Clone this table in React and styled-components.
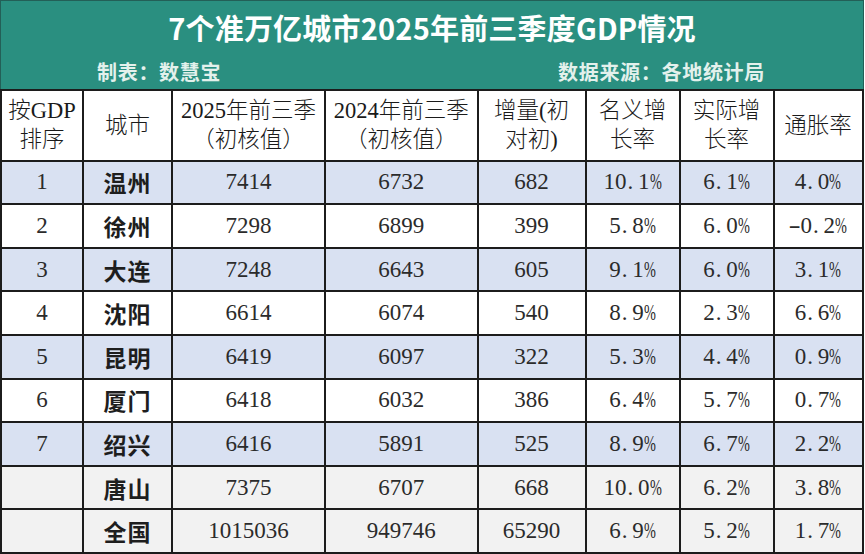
import React from "react";
import styled, { createGlobalStyle } from "styled-components";

const GlobalStyle = createGlobalStyle`
  html, body { margin: 0; padding: 0; background: #ffffff; }
  body { font-family: "Liberation Serif", "Noto Sans CJK SC", serif; }
`;

const Page = styled.div`
  width: 864px;
  height: 554px;
  overflow: hidden;
  display: flex;
  flex-direction: column;
`;

const Banner = styled.header`
  height: 89px;
  box-sizing: border-box;
  background: #2a8f80;
  border: 1px solid #235f57;
  border-bottom: none;
  display: flex;
  flex-direction: column;
  padding-top: 6px;
`;

const Title = styled.h1`
  margin: 0;
  font-family: "Noto Sans CJK SC", "Noto Sans", sans-serif;
  font-weight: 700;
  font-size: 29px;
  line-height: 40px;
  color: #ffffff;
  text-align: center;
  letter-spacing: 0.2px;
`;

const SubRow = styled.div`
  margin-top: 11px;
  display: flex;
  justify-content: space-between;
  padding: 0 98px 0 96px;
`;

const SubText = styled.span`
  font-family: "Noto Sans CJK SC", "Noto Sans", sans-serif;
  font-weight: 700;
  font-size: 20px;
  line-height: 28px;
  letter-spacing: 0.7px;
  color: #e3f1ec;
`;

const Grid = styled.div`
  display: grid;
  grid-template-columns: 82px 89px 153px 152.5px 108px 94px 94px 89px;
  grid-template-rows: 71px repeat(9, 43.6px);
  border-top: 2px solid #1c1c1c;
  border-left: 2px solid #1c1c1c;
  width: max-content;
`;

const rowBg = { blue: "#d9e1f2", white: "#ffffff", gray: "#f2f2f2" };

const Cell = styled.div`
  box-sizing: border-box;
  border-right: 2px solid #1c1c1c;
  border-bottom: 2px solid #1c1c1c;
  background: ${(p) => rowBg[p.$tone] || "#ffffff"};
  display: flex;
  align-items: center;
  justify-content: center;
  text-align: center;
  font-family: "Liberation Serif", "Noto Sans CJK SC", serif;
  font-size: 23px;
  color: #2b2b2b;
  white-space: nowrap;
`;

const HeadCell = styled(Cell)`
  font-size: 22.5px;
  font-weight: 300;
  line-height: 29px;
  color: #1a1a1a;
  white-space: normal;
`;

const CityCell = styled(Cell)`
  font-family: "Noto Sans CJK SC", sans-serif;
  font-weight: 700;
  letter-spacing: 1px;
  color: #1e1e1e;
`;

const Dot = styled.span`
  display: inline-block;
  width: 0.5em;
  text-align: left;
  padding-left: 0.04em;
  box-sizing: border-box;
`;

const Percent = styled.span`
  display: inline-block;
  width: 0.52em;
  transform: scaleX(0.62);
  transform-origin: left center;
`;

const Minus = styled.span`
  display: inline-block;
  width: 0.5em;
  transform: scaleX(1.6);
  transform-origin: center;
`;

function Figure({ text }) {
  const parts = [];
  let buf = "";
  const flush = () => {
    if (buf) {
      parts.push(buf);
      buf = "";
    }
  };
  [...text].forEach((ch, i) => {
    if (ch === ".") {
      flush();
      parts.push(<Dot key={i}>.</Dot>);
    } else if (ch === "%") {
      flush();
      parts.push(<Percent key={i}>%</Percent>);
    } else if (ch === "-") {
      flush();
      parts.push(<Minus key={i}>-</Minus>);
    } else {
      buf += ch;
    }
  });
  flush();
  return <span>{parts}</span>;
}

const headers = [
  ["按GDP", "排序"],
  ["城市"],
  ["2025年前三季", "（初核值）"],
  ["2024年前三季", "（初核值）"],
  ["增量(初", "对初)"],
  ["名义增", "长率"],
  ["实际增", "长率"],
  ["通胀率"],
];

const rows = [
  ["1", "温州", "7414", "6732", "682", "10.1%", "6.1%", "4.0%", "blue"],
  ["2", "徐州", "7298", "6899", "399", "5.8%", "6.0%", "-0.2%", "white"],
  ["3", "大连", "7248", "6643", "605", "9.1%", "6.0%", "3.1%", "blue"],
  ["4", "沈阳", "6614", "6074", "540", "8.9%", "2.3%", "6.6%", "white"],
  ["5", "昆明", "6419", "6097", "322", "5.3%", "4.4%", "0.9%", "blue"],
  ["6", "厦门", "6418", "6032", "386", "6.4%", "5.7%", "0.7%", "white"],
  ["7", "绍兴", "6416", "5891", "525", "8.9%", "6.7%", "2.2%", "blue"],
  ["", "唐山", "7375", "6707", "668", "10.0%", "6.2%", "3.8%", "gray"],
  ["", "全国", "1015036", "949746", "65290", "6.9%", "5.2%", "1.7%", "gray"],
];

export default function App() {
  return (
    <>
      <GlobalStyle />
      <Page>
        <Banner>
          <Title>7个准万亿城市2025年前三季度GDP情况</Title>
          <SubRow>
            <SubText>制表：数慧宝</SubText>
            <SubText>数据来源：各地统计局</SubText>
          </SubRow>
        </Banner>
        <Grid>
          {headers.map((lines, i) => (
            <HeadCell key={`h${i}`} $tone="white">
              <div>
                {lines.map((l, j) => (
                  <div key={j}>{l}</div>
                ))}
              </div>
            </HeadCell>
          ))}
          {rows.map((r, ri) => {
            const tone = r[8];
            return (
              <React.Fragment key={`r${ri}`}>
                <Cell $tone={tone}>{r[0]}</Cell>
                <CityCell $tone={tone}>{r[1]}</CityCell>
                <Cell $tone={tone}>{r[2]}</Cell>
                <Cell $tone={tone}>{r[3]}</Cell>
                <Cell $tone={tone}>{r[4]}</Cell>
                <Cell $tone={tone}>
                  <Figure text={r[5]} />
                </Cell>
                <Cell $tone={tone}>
                  <Figure text={r[6]} />
                </Cell>
                <Cell $tone={tone}>
                  <Figure text={r[7]} />
                </Cell>
              </React.Fragment>
            );
          })}
        </Grid>
      </Page>
    </>
  );
}
